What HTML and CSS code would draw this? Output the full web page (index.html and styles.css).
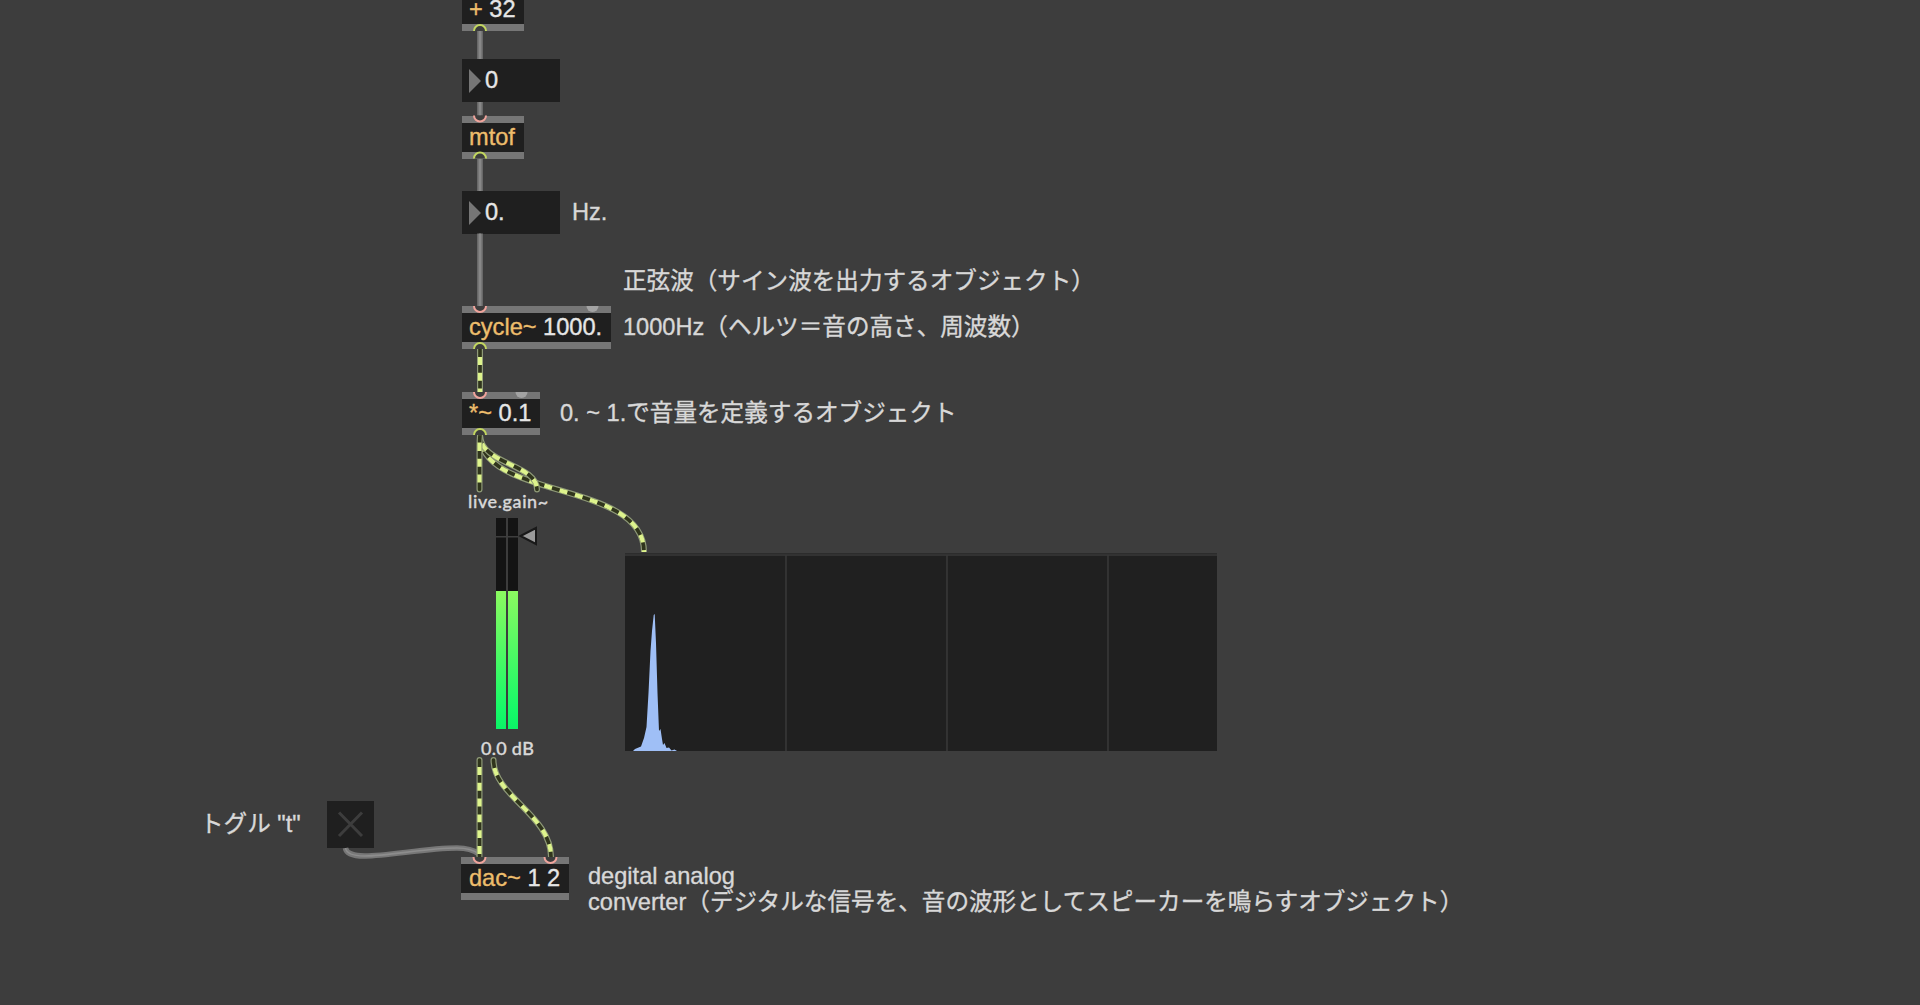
FILE: index.html
```html
<!DOCTYPE html>
<html lang="ja">
<head>
  <meta charset="UTF-8">
  <title>Sine Patch</title>
  <link rel="stylesheet" href="styles.css">
</head>
<body>

  <div class="patcher">

    <!-- Objects -->
    <div class="object plus"><b>+</b> 32</div>
    <div class="number number-midi"><i class="arrow"></i>0</div>
    <div class="object mtof"><b>mtof</b></div>
    <div class="number number-hz"><i class="arrow"></i>0.</div>
    <div class="object cycle"><b>cycle~</b> 1000.</div>
    <div class="object times"><b>*~</b> 0.1</div>
    <div class="object dac"><b>dac~</b> 1 2</div>

    <!-- Toggle -->
    <div class="toggle">
      <svg width="47" height="47" viewBox="0 0 47 47">
        <path d="M12 11.5 L35 35 M35 11.5 L12 35" />
      </svg>
    </div>

    <!-- live.gain~ -->
    <div class="gain-name">live.gain~</div>
    <svg class="gain" width="60" height="212" viewBox="0 0 60 212">
      <defs>
        <linearGradient id="level" x1="0" y1="0" x2="0" y2="1">
          <stop offset="0" stop-color="#8bfa60" />
          <stop offset="0.85" stop-color="#17fa68" />
          <stop offset="1" stop-color="#0bf366" />
        </linearGradient>
      </defs>
      <rect x="0" y="0" width="10" height="73" fill="#141414" />
      <rect x="12" y="0" width="10" height="73" fill="#141414" />
      <rect x="0" y="18" width="22" height="1.5" fill="#3e3e3e" />
      <rect x="0" y="73" width="10" height="138" fill="url(#level)" />
      <rect x="12" y="73" width="10" height="138" fill="url(#level)" />
      <path d="M24.5 18 L40 10 V26 Z" fill="#9a9a9a" stroke="#191919" stroke-width="2" />
    </svg>
    <div class="gain-value">0.0 dB</div>

    <!-- Spectroscope -->
    <svg class="scope" width="592" height="198" viewBox="0 0 592 198">
      <rect width="592" height="198" fill="#202020" />
      <path d="M0 0.5 H592" stroke="#2c2c2c" />
      <path d="M0 2 H592 M161 2 V198 M322 2 V198 M483 2 V198" stroke="#383838" stroke-width="1.6" />
      <path d="M8 198 L10 196 L16 193.500 L19 185 L21.500 174 L23.500 140 L25.500 98 L27 78 L28.700 62 L29.700 61 L31 90 L32.500 140 L34 178 L35.500 176 L37 186 L38 192 L39.500 190 L41.500 195 L44 194.500 L46.500 197.500 L49.500 196.500 L52 198 Z" fill="#9fbff6" />
    </svg>

    <!-- Comments -->
    <div class="comment c-hz">Hz.</div>
    <div class="comment c-sine">正弦波（サイン波を出力するオブジェクト）</div>
    <div class="comment c-freq">1000Hz（ヘルツ＝音の高さ、周波数）</div>
    <div class="comment c-volume">0. ~ 1.で音量を定義するオブジェクト</div>
    <div class="comment c-toggle">トグル "t"</div>
    <div class="comment c-dac">degital analog<br>converter（デジタルな信号を、音の波形としてスピーカーを鳴らすオブジェクト）</div>

    <!-- Patch cords and ports -->
    <svg class="cords" width="1920" height="1005" viewBox="0 0 1920 1005">
      <defs>
        <path id="s1" d="M480 349 V392" />
        <path id="s2" d="M480 435 C480 464 537 464 537 489.500" />
        <path id="s3" d="M480 435 C480 500 644 480 644 552" />
        <path id="s4" d="M480 435 Q479.500 440 479.500 447 V489.500" />
        <path id="s5" d="M479.500 760 V857" />
        <path id="s6" d="M493.500 760 C493.500 796 551 815 551 857" />
        <path id="outlet" d="M-6 0 A6 6 0 0 1 6 0" />
        <path id="inlet" d="M-6 0 A6 6 0 0 0 6 0" />
      </defs>

      <g class="control">
        <path d="M480 31 V59 M480 102 V115.500 M480 158.500 V191 M480 233.500 V306" />
        <path d="M345.500 848 C348 866 412 848 457 848 Q471 848 479 854" />
      </g>
      <g class="control-core">
        <path d="M480 31 V59 M480 102 V115.500 M480 158.500 V191 M480 233.500 V306" />
        <path d="M345.500 848 C348 866 412 848 457 848 Q471 848 479 854" />
      </g>

      <g><use href="#s1" class="edge flat" /><use href="#s1" class="core flat" /><use href="#s1" class="dash d1" /></g>
      <g><use href="#s3" class="edge flat" /><use href="#s3" class="core flat" /><use href="#s3" class="dash d3" /></g>
      <g><use href="#s2" class="edge" /><use href="#s2" class="core" /><use href="#s2" class="dash d2" /></g>
      <g><use href="#s4" class="edge" /><use href="#s4" class="core" /><use href="#s4" class="dash d4" /></g>
      <g><use href="#s5" class="edge" /><use href="#s5" class="core" /><use href="#s5" class="dash d5" /></g>
      <g><use href="#s6" class="edge" /><use href="#s6" class="core" /><use href="#s6" class="dash d6" /></g>

      <g class="outlets">
        <use href="#outlet" x="480" y="31" />
        <use href="#outlet" x="480" y="158.500" />
        <use href="#outlet" x="480" y="349" />
        <use href="#outlet" x="480" y="435" />
      </g>
      <g class="inlets">
        <use href="#inlet" x="480" y="115.500" />
        <use href="#inlet" x="480" y="306" />
        <use href="#inlet" x="480" y="392" />
        <use href="#inlet" x="479.500" y="857" />
        <use href="#inlet" x="550.500" y="857" />
      </g>
      <g class="cold">
        <use href="#inlet" x="592.500" y="306" />
        <use href="#inlet" x="521.500" y="392" />
      </g>
    </svg>

  </div>

</body>
</html>
```
FILE: styles.css
```css
body {
  margin: 0;
  background-color: #3d3d3d;
  font-family: "Liberation Sans", "Noto Sans CJK JP", sans-serif;
  font-size: 23.6px;
  color: #d8d8d8;
  -webkit-text-stroke: 0.35px;
}

.patcher {
  position: relative;
  width: 1920px;
  height: 1005px;
  overflow: hidden;
}

.patcher > * {
  position: absolute;
  box-sizing: border-box;
  white-space: nowrap;
}

/* Object boxes */
.object {
  left: 462px;
  height: 43px;
  padding-left: 7px;
  border: solid #767676;
  border-width: 7.5px 0;
  background-color: #1f1f1f;
  color: #e6e6e6;
  line-height: 28px;
}

.object b {
  font-weight: normal;
  color: #edbd6c;
}

.plus { top: -12px; width: 62px; }
.mtof { top: 115.5px; width: 62px; }
.cycle { top: 306px; width: 149px; }
.times { top: 392px; width: 78px; }
.dac { left: 461px; top: 857px; width: 108px; padding-left: 8px; line-height: 29px; }

/* Number boxes */
.number {
  display: flex;
  align-items: center;
  gap: 4px;
  left: 462px;
  width: 98px;
  height: 43px;
  padding-left: 7px;
  background-color: #1f1f1f;
  color: #e6e6e6;
}

.number-midi { top: 59px; }
.number-hz { top: 191px; }

.arrow {
  border-left: 12px solid #767676;
  border-top: 12px solid transparent;
  border-bottom: 12px solid transparent;
}

/* Toggle */
.toggle {
  left: 327px;
  top: 801px;
  width: 47px;
  height: 47px;
  background-color: #1f1f1f;
}

.toggle path {
  stroke: #3d3d3d;
  stroke-width: 3;
}

/* Gain slider */
.gain { left: 496px; top: 518px; }

.gain-name, .gain-value {
  font-family: Lato, sans-serif;
  font-weight: 500;
  font-size: 18px;
  line-height: 22px;
}

.gain-name { left: 468px; top: 490px; letter-spacing: 0.6px; }
.gain-value { left: 481px; top: 737px; letter-spacing: 0.3px; }

.scope { left: 625px; top: 553px; }

/* Comments */
.comment {
  line-height: 26px;
}

.c-hz { left: 572px; top: 199px; }
.c-sine { left: 623px; top: 268px; }
.c-freq { left: 623px; top: 314px; }
.c-volume { left: 560px; top: 400px; }
.c-toggle { left: 200px; top: 811px; }
.c-dac { left: 588px; top: 864px; line-height: 25.5px; }

/* Patch cords */
.cords {
  left: 0;
  top: 0;
  fill: none;
}

.control { stroke: #777; stroke-width: 5.5; }
.control-core { stroke: #8d8d8d; stroke-width: 1.6; }

.edge { stroke: #8f9a78; stroke-width: 6; stroke-linecap: round; }
.core { stroke: #30351c; stroke-width: 3.6; stroke-linecap: round; }
.flat { stroke-linecap: butt; }
.dash { stroke: #def48d; stroke-width: 4.2; stroke-dasharray: 7.9 7.9; }

.d1 { stroke-dashoffset: -8; }
.d2 { stroke-dashoffset: -9; }
.d3 { stroke-dashoffset: -9; }
.d4 { stroke-dashoffset: -8; }
.d5 { stroke-dashoffset: -7; }
.d6 { stroke-dashoffset: -8; }

.outlets { fill: #3d3d3d; stroke: #c3d75f; stroke-width: 2; }
.inlets { fill: #3d3d3d; stroke: #f0a49c; stroke-width: 2; }
.cold { fill: #a3a3a3; }
```
